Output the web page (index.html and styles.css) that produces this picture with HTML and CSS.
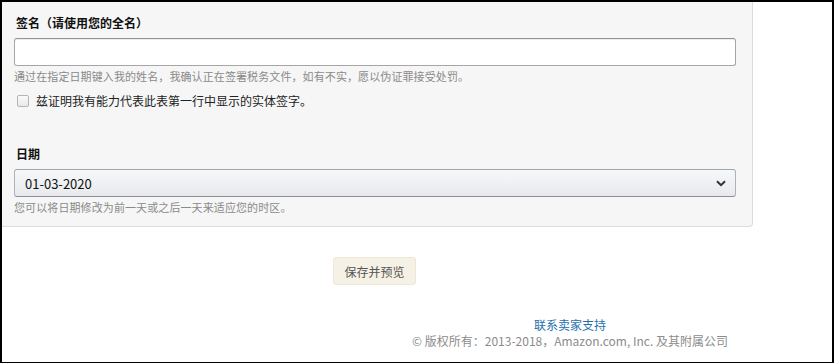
FILE: index.html
```html
<!DOCTYPE html>
<html lang="zh-CN">
<head>
<meta charset="utf-8">
<title>签名</title>
<link rel="stylesheet" href="styles.css">
</head>
<body>
<div class="frame">
  <section class="panel">
    <div class="field">
      <label class="label" for="sig">签名（请使用您的全名）</label>
      <input id="sig" class="text-input" type="text">
      <p class="hint">通过在指定日期键入我的姓名，我确认正在签署税务文件，如有不实，愿以伪证罪接受处罚。</p>
      <label class="check-row"><input type="checkbox" class="check"><span>兹证明我有能力代表此表第一行中显示的实体签字。</span></label>
    </div>
    <div class="field date-field">
      <label class="label" for="date">日期</label>
      <div class="select">
        <span class="select-value">01-03-2020</span>
        <svg class="chevron" width="10" height="7" viewBox="0 0 10 7"><path d="M1 1.2 L5 5.2 L9 1.2" fill="none" stroke="#333" stroke-width="2"/></svg>
      </div>
      <p class="hint">您可以将日期修改为前一天或之后一天来适应您的时区。</p>
    </div>
  </section>
  <div class="actions">
    <button class="btn" type="button">保存并预览</button>
  </div>
  <footer class="footer">
    <a class="support" href="#">联系卖家支持</a>
    <p class="copy">© 版权所有：2013-2018，Amazon.com, Inc. 及其附属公司</p>
  </footer>
</div>
</body>
</html>
```
FILE: styles.css
```css
html, body {
  margin: 0;
  padding: 0;
  background: #000;
}
body {
  font-family: "Noto Sans CJK SC", "Noto Sans", sans-serif;
  color: #111;
}
.frame {
  margin: 2px 2px 1px 2px;
  height: 360px;
  background: #fff;
  overflow: hidden;
}
.panel {
  box-sizing: border-box;
  width: 751px;
  height: 225px;
  padding: 0 0 0 12px;
  background: #f6f6f6;
  border-right: 1px solid #dcdcdc;
  border-bottom: 1px solid #dcdcdc;
  border-bottom-right-radius: 4px;
}
.field {
  width: 722px;
  padding-top: 13px;
}
.label {
  display: block;
  font-size: 12px;
  font-weight: bold;
  line-height: 16px;
  height: 16px;
  margin-left: 2px;
}
.text-input {
  display: block;
  box-sizing: border-box;
  width: 722px;
  height: 28px;
  margin: 7px 0 0 0;
  border: 1px solid #a6a6a6;
  border-top-color: #949494;
  border-radius: 3px;
  background: #fff;
  box-shadow: 0 1px 0 rgba(0,0,0,.07) inset;
}
.hint {
  margin: 2px 0 0 0;
  font-size: 11px;
  letter-spacing: 0.1px;
  line-height: 16px;
  color: #8a8a8a;
}
.check-row {
  display: flex;
  align-items: center;
  gap: 7px;
  margin: 9px 0 0 3px;
  font-size: 12px;
  line-height: 16px;
  color: #222;
}
.check {
  appearance: none;
  -webkit-appearance: none;
  margin: 0;
  width: 12px;
  height: 12px;
  border: 1px solid #b5b5b5;
  border-radius: 2px;
  background: linear-gradient(#fafafa, #e8e8e8);
}
.date-field {
  padding-top: 37px;
}
.select {
  display: flex;
  align-items: center;
  justify-content: space-between;
  box-sizing: border-box;
  width: 722px;
  height: 28px;
  margin-top: 7px;
  padding: 0 9px 0 10px;
  border: 1px solid #adb1b8;
  border-top-color: #a2a6ac;
  border-bottom-color: #8d9096;
  border-radius: 3px;
  background: linear-gradient(#f7f8fa, #e7e9ec);
}
.select-value {
  font-size: 13px;
  color: #111;
}
.chevron {
  display: block;
}
.actions {
  padding: 30px 0 0 331px;
}
.btn {
  box-sizing: border-box;
  width: 83px;
  height: 28px;
  border: 1px solid #ece7d8;
  border-radius: 3px;
  background: #f5f1e4;
  font-family: inherit;
  font-size: 12px;
  color: #555;
  padding: 0;
}
.footer {
  padding: 32px 0 0 306px;
  text-align: center;
}
.support {
  display: block;
  font-size: 12px;
  line-height: 16px;
  color: #1f6fad;
  text-decoration: none;
}
.copy {
  margin: 0;
  font-size: 12px;
  line-height: 16px;
  color: #8c8c8c;
}
```
